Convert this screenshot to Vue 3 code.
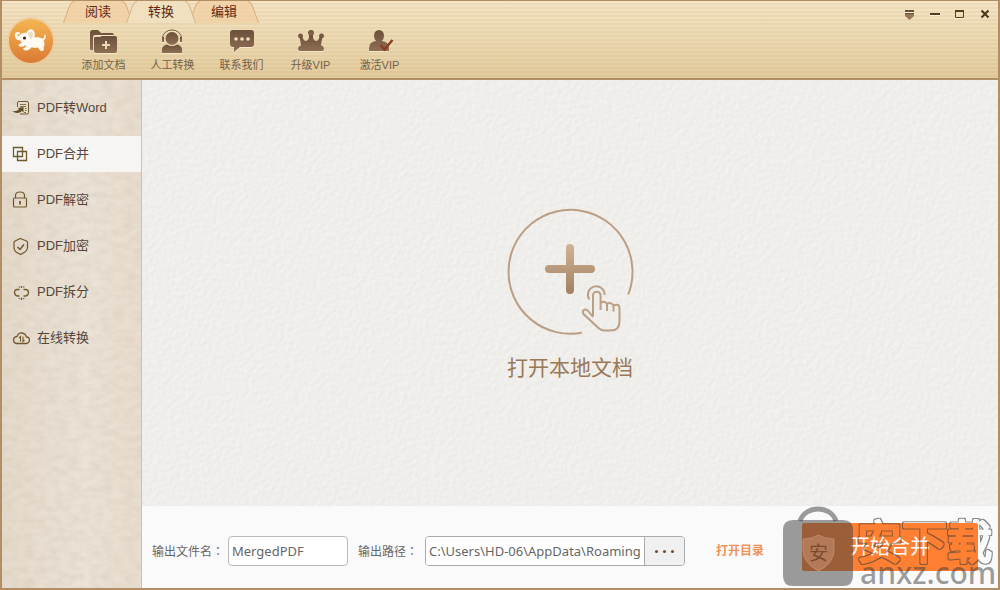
<script setup>
import { ref } from 'vue'

const tabs = ['阅读', '转换', '编辑']
const activeTab = ref('转换')
const tools = [
  { id: 'add', label: '添加文档' },
  { id: 'service', label: '人工转换' },
  { id: 'chat', label: '联系我们' },
  { id: 'crown', label: '升级VIP' },
  { id: 'activate', label: '激活VIP' },
]
const menu = [
  { id: 'word', label: 'PDF转Word' },
  { id: 'merge', label: 'PDF合并' },
  { id: 'unlock', label: 'PDF解密' },
  { id: 'encrypt', label: 'PDF加密' },
  { id: 'split', label: 'PDF拆分' },
  { id: 'cloud', label: '在线转换' },
]
const current = ref('merge')
const fileName = ref('MergedPDF')
const outputPath = ref('C:\\Users\\HD-06\\AppData\\Roaming')
</script>

<template>
  <div class="window">
    <header class="header">
      <svg class="logo" viewBox="0 0 50 50" aria-hidden="true">
        <defs>
          <linearGradient id="logoFill" x1="0" y1="0" x2="0" y2="1">
            <stop offset="0" stop-color="#f5b552" />
            <stop offset="1" stop-color="#da7a33" />
          </linearGradient>
        </defs>
        <circle cx="25" cy="25" r="24" fill="#f0c79a" opacity=".7" />
        <circle cx="25" cy="25" r="22" fill="url(#logoFill)" />
        <path fill="#fffaf2" d="M9 20.500c-.8-2.500.8-4.500 3-4.500 1.500 0 2.300.9 1.900 1.700-.4.800-1.600.2-2.200.9-.6.900 0 2 1.100 1.700 1.500-2.800 4.400-4.200 7.700-3.300 1.200-3.500 4.800-4.800 7-2.600 1.700 1.800 1.500 5 .8 7.100 3-.6 6-.4 8.200 1.300 1.500-.8 2.600-2.300 1.600-4l1-.6c1.500 2.300.6 4.700-1.400 6.200 1 2.600 1.200 5-.1 6.800l.3 2.500c-1 1.800-3.300 1.500-4.200.3l-1.400-2.500c-2.200.6-4.700.3-6.700-.3-1.400 1.900-3.200 3.200-5.700 3.200-2 .2-3-.9-2.500-2.100l2.700-1.600-.7-1.800c-1.300 1.400-3.200 2.200-5.300 1.800-1.500-.3-1.900-1.500-1.100-2.500l3.200-1.600c-1.200-.6-1.900-1.400-2.100-2.500-2.800.3-4.600-1.200-5.100-3.600z" />
        <path d="M22 17c1.500-2 4.700-1.500 5 1 .3 2.500-.6 4.200-2 5-1.600-.6-2.900-3-3-6z" fill="#e9ddcb" />
        <circle cx="18.500" cy="22" r="1.600" fill="#43221a" />
      </svg>
      <div class="header-main">
        <div class="title-row">
          <nav class="tabs">
            <button
              v-for="tab in tabs"
              :key="tab"
              class="tab"
              :class="{ active: tab === activeTab }"
              @click="activeTab = tab"
            >
              <svg class="tab-shape" viewBox="0 0 70 22" aria-hidden="true">
                <path class="tab-fill" d="M0 22L6 5Q7.500 0 11 0H59Q62.500 0 64 5L70 22z" />
                <path class="tab-line" d="M.5 22L6.500 5Q8 .5 11 .5M59 .5Q62 .5 63.500 5L69.500 22" />
              </svg>
              <span>{{ tab }}</span>
            </button>
          </nav>
          <div class="controls">
            <button aria-label="菜单">
              <svg viewBox="0 0 12 12"><path d="M1 1h9v2H1zM1 4h9v1H1z" fill="#69503a" /><path d="M1 3h9v1H1z" fill="#fff5dc" /><path d="M1 5h9v2L5.500 11 1 7z" fill="#98765a" /></svg>
            </button>
            <button aria-label="最小化">
              <svg viewBox="0 0 12 12"><path d="M1 6.500h10" stroke="#fff5dc" /><path d="M1 5h10" stroke="#553c20" stroke-width="2" /></svg>
            </button>
            <button aria-label="最大化">
              <svg viewBox="0 0 12 12"><path d="M1 9.500h9" stroke="#fff5dc" /><path d="M1.500 8.500V1.500h8v7z" fill="none" stroke="#553c20" /><path d="M1 2h9" stroke="#553c20" stroke-width="2" /></svg>
            </button>
            <button aria-label="关闭">
              <svg viewBox="0 0 12 12"><path d="M2.500 1.500l7 7M9.500 1.500l-7 7" stroke="#4b3319" stroke-width="2" /></svg>
            </button>
          </div>
        </div>
        <div class="toolbar">
          <button v-for="tool in tools" :key="tool.id" class="tool">
            <svg viewBox="0 0 30 26" aria-hidden="true">
              <defs>
                <linearGradient id="toolFill" x1="0" y1="0" x2="0" y2="1">
                  <stop offset="0" stop-color="#6b503a" />
                  <stop offset="1" stop-color="#8f6f54" />
                </linearGradient>
              </defs>
              <g v-if="tool.id === 'add'" fill="url(#toolFill)">
                <path d="M1 20V3.500Q1 1 3.500 1H9l3 3h11q2 0 2 2H6.500Q4 6 4 8.500V21Q1 22 1 20z" />
                <path d="M5 9Q5 8 6.500 8H11l2-1h13q2 0 2 2v13q0 2-2 2H7q-2 0-2-2z" />
                <path d="M17 12v8M13 16h8" stroke="#ecdab4" stroke-width="2" />
              </g>
              <g v-else-if="tool.id === 'service'" fill="url(#toolFill)">
                <circle cx="14" cy="9.500" r="6.500" />
                <path d="M4.500 12V9.500a9.500 8.500 0 0 1 19 0V12" fill="none" stroke="#73563f" />
                <path d="M4 8h2v5H4zM22 8h2v5h-2z" />
                <path d="M4 24v-4q0-3 5-4.500 5 3 10 0 5 1.500 5 4.500v4z" />
              </g>
              <g v-else-if="tool.id === 'chat'">
                <path fill="url(#toolFill)" d="M6 1h18q3 0 3 3v11q0 3-3 3H13l-6 5v-5H6q-3 0-3-3V4q0-3 3-3z" />
                <g fill="#f1e1bf"><circle cx="9" cy="10" r="1.800" /><circle cx="15" cy="10" r="1.800" /><circle cx="21" cy="10" r="1.800" /></g>
              </g>
              <g v-else-if="tool.id === 'crown'" fill="url(#toolFill)">
                <circle cx="15" cy="4" r="3" /><circle cx="4.500" cy="7" r="2.500" /><circle cx="25.500" cy="7" r="2.500" />
                <path d="M3.500 7.500L6 7q1.500 5 4 5 3.500-1 3-6h4q-.5 5 3 6 2.500 0 4-5l2.500.5-1.500 9q3 .5 3 3.500 0 2-2 2H4q-2 0-2-2 0-3 3-3.500z" />
              </g>
              <g v-else>
                <path fill="url(#toolFill)" d="M4 22v-3q0-6 7-7-2-2-2-5.500a5 5.500 0 0 1 10 0Q19 10 17 12q7 1 7 7v3z" />
                <path d="M15.500 16l4 4.500L27.500 11" fill="none" stroke="#8a3d20" stroke-width="2.500" />
              </g>
            </svg>
            <span>{{ tool.label }}</span>
          </button>
        </div>
      </div>
    </header>

    <div class="body">
      <aside class="sidebar">
        <svg class="texture" aria-hidden="true">
          <filter id="parchment" x="0" y="0" width="100%" height="100%" color-interpolation-filters="sRGB">
            <feTurbulence type="fractalNoise" baseFrequency=".09 .16" numOctaves="3" seed="4" />
            <feColorMatrix values="0 0 0 0 .76  0 0 0 0 .7  0 0 0 0 .62  .4 0 0 0 -.12" />
          </filter>
          <rect width="100%" height="100%" filter="url(#parchment)" />
        </svg>
        <button
          v-for="item in menu"
          :key="item.id"
          class="menu-item"
          :class="{ active: item.id === current }"
          @click="current = item.id"
        >
          <svg viewBox="0 0 18 18" fill="none" stroke="#705a2c" aria-hidden="true">
            <g v-if="item.id === 'word'">
              <path d="M5.500 8V4Q5.500 2.500 7 2.500h8q1.500 0 1.500 1.500v9.500q0 1.500-1.500 1.500H8" />
              <path d="M8 5.500h6M8 7.500h6M13 9.500h1.500M13 11.500h1.500M12 13.500h2" stroke-opacity=".8" />
              <path d="M0 12q4 1 7-1.500L6 9l5.500-1v5.500L10 12q-4.500 4-10 0z" fill="#624c23" stroke="none" />
            </g>
            <g v-else-if="item.id === 'merge'" stroke-width="1.300">
              <path d="M1.500 2.500h9v9h-9zM5.500 6.500h9v9h-9z" />
            </g>
            <g v-else-if="item.id === 'unlock'" stroke-width="1.200">
              <rect x="1.500" y="7" width="13" height="9" rx="1" /><path d="M3.500 7V4.500Q3.500 1 8 1t4.500 3.500V7" />
              <path d="M8 10v3.500" stroke-width="1.800" />
            </g>
            <g v-else-if="item.id === 'encrypt'" stroke-width="1.200">
              <path d="M8.500 1.500L14.500 4Q15.500 4.500 15.500 5.500v5q0 2.500-2.500 4.500l-4.500 2.500L4 15Q2 13 2 10.500v-5q0-1 1-1.500z" />
              <path d="M5.500 10l2.500 2.500 4-5" stroke-width="1.500" />
            </g>
            <g v-else-if="item.id === 'split'" stroke-width="1.300">
              <path d="M7.500 6.500H5.500Q2.500 6.500 2.500 9.500t3 3.500H7.500M11.500 6.500h2Q16.500 6.500 16.500 9.500t-3 3.500h-2" />
              <path d="M9.500 3v2M7 3.500l.5 1M12 3.500l-.5 1M9.500 14.500v2.500M7 16l.5-1M12 16l-.5-1" />
            </g>
            <g v-else stroke-width="1.300">
              <path d="M6 14.500H4.500Q1.500 14 1.500 11T5 7.500Q6.500 3.500 10 4t4.500 4Q17.500 8 17.500 11t-3 3.500H6z" />
              <path d="M8.500 12.500v-5L7 9M11 7.500v5l1.500-1.500" stroke-width="1.100" />
            </g>
          </svg>
          <span>{{ item.label }}</span>
        </button>
      </aside>

      <main class="main">
        <section class="canvas">
          <svg class="texture" aria-hidden="true">
            <filter id="emboss" x="0" y="0" width="100%" height="100%" color-interpolation-filters="sRGB">
              <feTurbulence type="fractalNoise" baseFrequency=".22" numOctaves="2" seed="8" result="n" />
              <feDiffuseLighting in="n" lighting-color="#efeeeb" surfaceScale=".1" diffuseConstant="1.155">
                <feDistantLight azimuth="225" elevation="60" />
              </feDiffuseLighting>
            </filter>
            <rect width="100%" height="100%" filter="url(#emboss)" />
          </svg>
          <button class="open">
            <svg viewBox="0 0 130 130" fill="none" stroke="#bb9f84" stroke-width="2" aria-hidden="true">
              <defs>
                <linearGradient id="plusFill" gradientUnits="userSpaceOnUse" x1="0" y1="37" x2="0" y2="87">
                  <stop offset="0" stop-color="#d0b496" />
                  <stop offset="1" stop-color="#a27f62" />
                </linearGradient>
              </defs>
              <path d="M123.300 87.300A62 62 0 1 0 76.700 125.800" />
              <path fill="url(#plusFill)" stroke="none" d="M61 41a4 4 0 0 1 8 0V58H86a4 4 0 0 1 0 8H69V83a4 4 0 0 1-8 0V66H44a4 4 0 0 1 0-8H61z" />
              <path d="M84.500 92.500a8.300 8.300 0 1 1 15-4.500" />
              <path d="M88 109V88.500a3.800 3.800 0 0 1 7.600 0V103M95.600 96q4-3 6.400 1v7M102 97q4-2.500 6.500 1.500v6M108.500 98.500q6-2.500 6 3v13q0 9-9 9h-6q-3.500 0-6-2.500L78.500 107q-2-3.500 1.500-4.500 2-.5 4 2.500l4 5" />
            </svg>
            <span>打开本地文档</span>
          </button>
        </section>

        <footer class="footer">
          <div class="fields">
            <label for="file-name">输出文件名<span class="colon">：</span></label>
            <input id="file-name" v-model="fileName" class="name-input" type="text" />
            <label class="path-label" for="path">输出路径<span class="colon">：</span></label>
            <div class="path-box">
              <input id="path" v-model="outputPath" type="text" />
              <button aria-label="浏览"><i></i><i></i><i></i></button>
            </div>
            <a href="#">打开目录</a>
          </div>
          <button class="start">开始合并</button>
          <svg class="mark" viewBox="0 0 216 84" aria-hidden="true">
            <defs>
              <filter id="outline" x="-5%" y="-10%" width="110%" height="120%">
                <feMorphology in="SourceGraphic" operator="dilate" radius="1" result="wide" />
                <feComposite in="wide" in2="SourceAlpha" operator="out" />
              </filter>
            </defs>
            <path d="M18 17C23 1 49 1 54 17" fill="none" stroke="#3c3c3c" stroke-opacity=".51" stroke-width="5" />
            <path d="M11 16H61Q71 16 71 26V72Q71 82 61 82H11Q1 82 1 72V26Q1 16 11 16z" fill="#3c3c3c" fill-opacity=".51" />
            <path d="M36.500 31Q43 35 52 35V46Q52 59 36.500 67 21 59 21 46V35Q30 35 36.500 31z" fill="#d6a58c" fill-opacity=".4" stroke="#c8957b" stroke-opacity=".7" />
            <text x="27" y="56" class="mark-small">安</text>
            <text x="75" y="55" class="mark-title" filter="url(#outline)">安下载</text>
            <text x="78" y="80" class="mark-site">anxz.com</text>
          </svg>
        </footer>
      </main>
    </div>
  </div>
</template>

<style>
body { margin: 0; }
</style>

<style scoped>
* { box-sizing: border-box; }
.window {
  min-height: 100vh;
  display: flex;
  flex-direction: column;
  border: 2px solid #b28e64;
  border-top-width: 1px;
  font: 12px/16px "Liberation Sans", "Noto Sans CJK SC", sans-serif;
  color: #54463a;
}
button { border: 0; padding: 0; margin: 0; background: none; font: inherit; color: inherit; cursor: pointer; }
svg { display: block; }

.header {
  height: 79px;
  display: flex;
  border-bottom: 2px solid #b28e64;
  background:
    repeating-linear-gradient(transparent 0 2px, rgba(166, 122, 50, .08) 2px 4px),
    linear-gradient(#f4e4c5, #ead7af 60%, #e2cb9d);
}
.logo { width: 50px; height: 50px; margin: 15px 0 0 4px; }
.header-main { flex: 1; margin-left: 7px; }
.title-row { display: flex; justify-content: space-between; height: 22px; }
.tabs { display: flex; }
.tab {
  position: relative;
  width: 70px;
  height: 22px;
  margin-right: -7px;
  font-size: 13px;
  line-height: 22px;
  color: #642711;
}
.tab span { position: relative; }
.tab-shape { position: absolute; inset: 0; width: 100%; height: 100%; }
.tab-fill { fill: #f1cfa4; fill-opacity: .8; }
.tab-line { fill: none; stroke: #d6b07c; }
.tab.active { z-index: 1; }
.tab.active .tab-fill { fill: #f1e0bf; fill-opacity: 1; }
.controls { display: flex; gap: 13px; padding: 8px 7px 0 0; }
.controls button, .controls svg { width: 12px; height: 12px; }

.toolbar { display: flex; padding: 6px 0 0 6px; }
.tool {
  width: 69px;
  display: flex;
  flex-direction: column;
  align-items: center;
  gap: 2px;
  font-size: 11px;
  color: #75604a;
}
.tool svg { width: 30px; height: 26px; filter: drop-shadow(0 1px 0 #f6e7c8); }

.body { flex: 1; display: flex; }
.sidebar {
  position: relative;
  width: 140px;
  flex: none;
  display: flex;
  flex-direction: column;
  gap: 10px;
  padding-top: 10px;
  border-right: 1px solid #d9c08f;
  background: linear-gradient(90deg, #e5dacb, #ebe3d7 60%, #e8ddce);
}
.texture { position: absolute; inset: 0; width: 100%; height: 100%; }
.menu-item {
  position: relative;
  height: 36px;
  display: flex;
  align-items: center;
  gap: 7px;
  padding-left: 10px;
  font-size: 13px;
  text-align: left;
}
.menu-item.active { background: rgba(246, 246, 245, .94); }
.menu-item svg { width: 18px; height: 18px; }

.main { flex: 1; min-width: 0; display: flex; flex-direction: column; }
.canvas {
  position: relative;
  flex: 1;
  display: flex;
  align-items: center;
  justify-content: center;
  padding-top: 4px;
  background: #f0eeeb;
}
.open {
  position: relative;
  display: flex;
  flex-direction: column;
  align-items: center;
  gap: 16px;
  font-size: 21px;
  line-height: 30px;
  color: #997858;
}
.open svg { width: 130px; height: 130px; }

.footer {
  position: relative;
  height: 82px;
  display: flex;
  align-items: center;
  justify-content: space-between;
  padding: 0 20px 0 10px;
  background: #fafafa;
}
.fields { display: flex; align-items: center; padding-top: 8px; color: #666; }
.fields label { width: 76px; white-space: nowrap; }
.fields .path-label { width: 67px; margin-left: 10px; }
.colon { font-family: "Noto Sans CJK TC", sans-serif; }
input {
  border: 1px solid #b8b8b8;
  border-radius: 4px;
  height: 30px;
  padding: 0 3px;
  background: #fff;
  color: #666;
  font: 13px "Noto Sans", sans-serif;
  outline: 0;
}
.name-input { width: 120px; }
.path-box {
  width: 260px;
  height: 30px;
  display: flex;
  border: 1px solid #aaa;
  border-radius: 4px;
  overflow: hidden;
  background: #fff;
}
.path-box input { flex: 1; min-width: 0; height: 28px; border: 0; border-radius: 0; }
.path-box button {
  width: 40px;
  display: flex;
  align-items: center;
  justify-content: center;
  gap: 5px;
  border-left: 1px solid #aaa;
  background: #f0f0f0;
}
.path-box i { width: 3px; height: 3px; border-radius: 50%; background: #704c32; }
.fields a { margin-left: 31px; font-weight: bold; color: #ef935b; text-decoration: none; }
.start {
  width: 176px;
  height: 48px;
  border-radius: 2px;
  background: #ff8033;
  color: #fff;
  font-size: 20px;
}
.mark { position: absolute; right: 0; bottom: 0; width: 216px; height: 84px; pointer-events: none; }
.mark-small { font-size: 19px; fill: #7e4a2e; }
.mark-title { font-size: 45px; fill: #3c3c3c; stroke: #3c3c3c; stroke-width: 3px; stroke-linejoin: round; opacity: .6; }
.mark-site { font-family: "Noto Sans", sans-serif; font-size: 30px; font-weight: 500; fill: #3c3c3c; fill-opacity: .51; }
</style>
